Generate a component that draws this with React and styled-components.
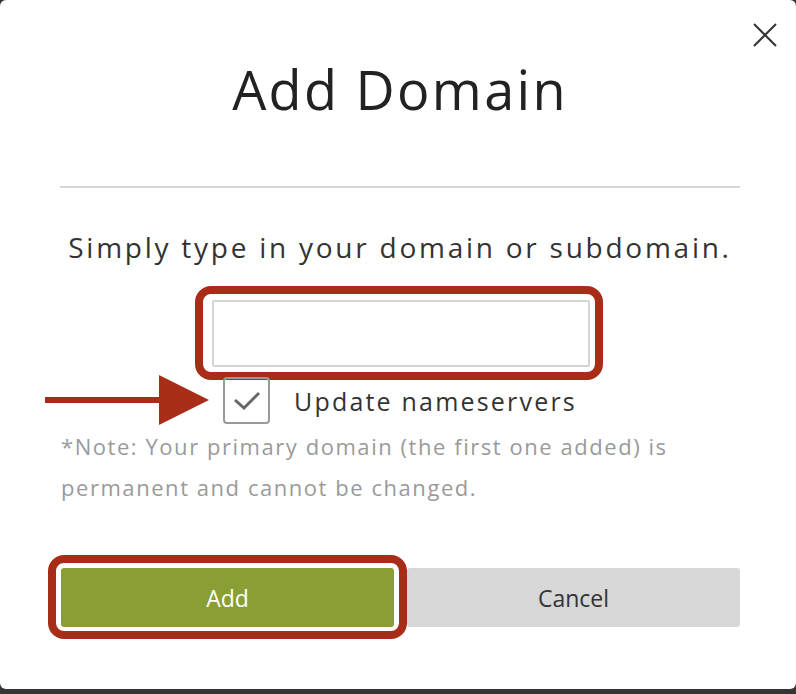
import styled, { createGlobalStyle } from 'styled-components';

const GlobalStyle = createGlobalStyle`
	html, body {
		margin: 0;
		padding: 0;
		background: #353535;
	}
	body {
		font-family: 'Open Sans', 'Noto Sans', sans-serif;
		color: #333;
	}
`;

const Modal = styled.div`
	position: relative;
	box-sizing: border-box;
	width: 796px;
	height: 689px;
	background: #fff;
	border-radius: 6px;
	padding: 0 56px 0 60px;
	display: flex;
	flex-direction: column;
	align-items: center;
`;

const CloseBtn = styled.button`
	position: absolute;
	top: 19px;
	right: 15px;
	width: 32px;
	height: 32px;
	padding: 0;
	border: 0;
	background: none;
	cursor: pointer;
	display: flex;
	align-items: center;
	justify-content: center;
`;

const Title = styled.h1`
	margin: 57px 0 0;
	font-size: 54px;
	font-weight: 400;
	line-height: 64px;
	letter-spacing: 2.3px;
	color: #222;
`;

const Divider = styled.hr`
	align-self: stretch;
	margin: 65px 0 0;
	border: 0;
	height: 2px;
	background: #d6d6d6;
`;

const Prompt = styled.p`
	margin: 40px 0 0;
	font-size: 28px;
	line-height: 38px;
	letter-spacing: 2.75px;
	color: #333;
`;

const InputWrap = styled.div`
	position: relative;
	margin-top: 34px;
	margin-left: 2px;
`;

const DomainInput = styled.input`
	display: block;
	box-sizing: border-box;
	width: 378px;
	height: 67px;
	border: 2px solid #d4d4d4;
	border-radius: 2px;
	outline: none;
	font: inherit;
	font-size: 22px;
	padding: 0 14px;
`;

const Highlight = styled.span`
	position: absolute;
	top: ${p => p.$top}px;
	left: ${p => p.$left}px;
	right: ${p => p.$right}px;
	bottom: ${p => p.$bottom}px;
	border: 8px solid #a82d19;
	border-radius: 16px;
	pointer-events: none;
`;

const CheckRow = styled.label`
	position: relative;
	display: flex;
	align-items: center;
	gap: 24px;
	margin-top: 10px;
	cursor: pointer;
`;

const CheckBox = styled.span`
	box-sizing: border-box;
	width: 47px;
	height: 47px;
	border: 2px solid #999;
	border-radius: 4px;
	display: flex;
	align-items: center;
	justify-content: center;
`;

const CheckLabel = styled.span`
	font-size: 25px;
	letter-spacing: 2.2px;
	color: #333;
`;

const Arrow = styled.svg`
	position: absolute;
	left: -178px;
	top: -3px;
`;

const Note = styled.p`
	align-self: stretch;
	margin: 2px 0 0 1px;
	font-size: 22px;
	line-height: 41px;
	letter-spacing: 1.55px;
	color: #9a9a9a;
`;

const Footer = styled.div`
	align-self: stretch;
	display: flex;
	gap: 13px;
	margin-top: 60px;
	margin-left: 1px;
`;

const BtnWrap = styled.div`
	position: relative;
	flex: 1;
	display: flex;
`;

const Button = styled.button`
	flex: 1;
	height: 59px;
	border: 0;
	border-radius: 3px;
	font-family: 'Open Sans', 'Noto Sans', sans-serif;
	font-size: 23px;
	background: ${p => (p.$primary ? '#899f33' : '#d7d7d7')};
	color: ${p => (p.$primary ? '#fff' : '#333')};
	cursor: pointer;
`;

const App = () => {
	return (
		<>
			<GlobalStyle />
			<Modal>
				<CloseBtn aria-label='Close'>
					<svg width='26' height='26' viewBox='0 0 26 26'>
						<path d='M2 2 L24 24 M24 2 L2 24' stroke='#333' strokeWidth='2' fill='none' />
					</svg>
				</CloseBtn>
				<Title>Add Domain</Title>
				<Divider />
				<Prompt>Simply type in your domain or subdomain.</Prompt>
				<InputWrap>
					<DomainInput type='text' />
					<Highlight $top={-14} $left={-17} $right={-13} $bottom={-13} />
				</InputWrap>
				<CheckRow>
					<Arrow width='166' height='52' viewBox='0 0 166 52'>
						<path d='M0 23 H118 V29 H0 Z' fill='#a82d19' />
						<path d='M114 1 L164 26 L114 51 Z' fill='#a82d19' />
					</Arrow>
					<CheckBox>
						<svg width='30' height='22' viewBox='0 0 30 22'>
							<path d='M3 10 L12 18 L27 3' stroke='#666' strokeWidth='3' fill='none' />
						</svg>
					</CheckBox>
					<CheckLabel>Update nameservers</CheckLabel>
				</CheckRow>
				<Note>*Note: Your primary domain (the first one added) is permanent and cannot be changed.</Note>
				<Footer>
					<BtnWrap>
						<Button $primary>Add</Button>
						<Highlight $top={-13} $left={-13} $right={-13} $bottom={-12} />
					</BtnWrap>
					<BtnWrap>
						<Button>Cancel</Button>
					</BtnWrap>
				</Footer>
			</Modal>
		</>
	);
};

export default App;
